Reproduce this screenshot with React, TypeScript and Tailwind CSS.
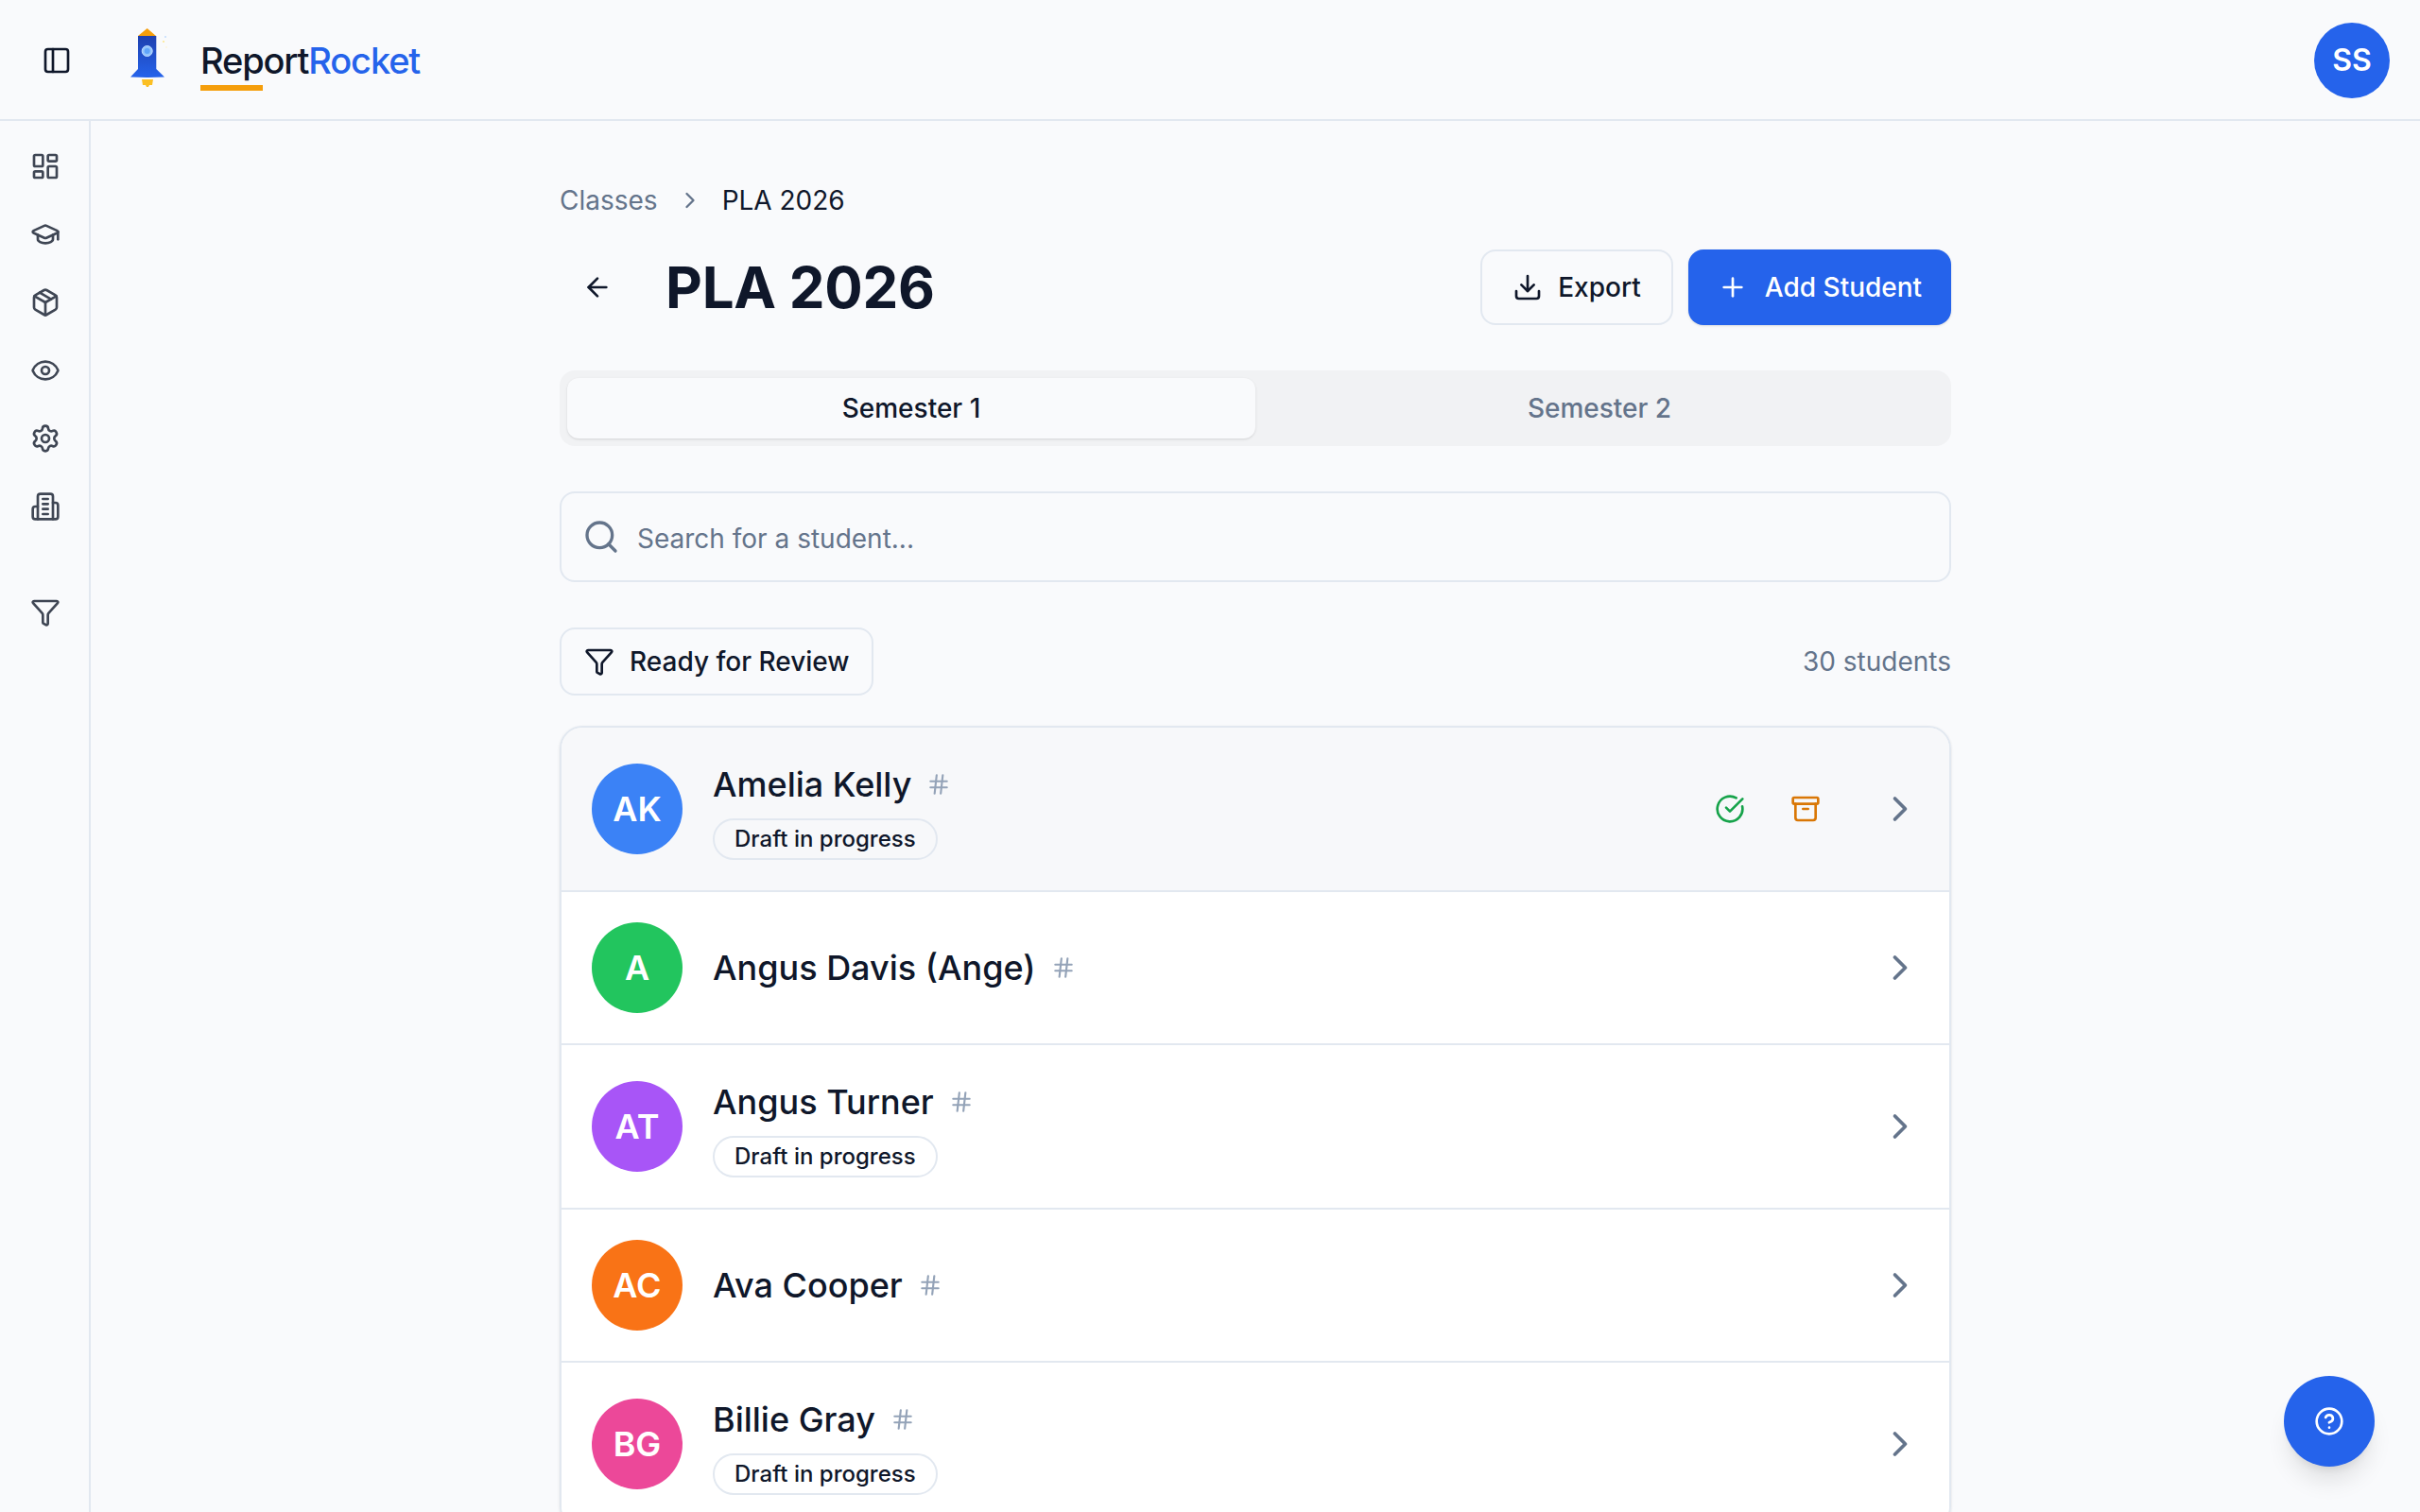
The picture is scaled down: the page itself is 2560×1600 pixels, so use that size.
import {
  ArrowLeft,
  Archive,
  ChevronRight,
  CircleCheckBig,
  CircleHelp,
  Download,
  Eye,
  Filter,
  GraduationCap,
  Hash,
  LayoutDashboard,
  Package,
  PanelLeft,
  Plus,
  Search,
  Settings,
} from 'lucide-react'

const students = [
  { name: 'Amelia Kelly', initials: 'AK', color: 'bg-[#3b82f6]', draft: true, active: true },
  { name: 'Angus Davis (Ange)', initials: 'A', color: 'bg-[#22c55e]', draft: false, active: false },
  { name: 'Angus Turner', initials: 'AT', color: 'bg-[#a855f7]', draft: true, active: false },
  { name: 'Ava Cooper', initials: 'AC', color: 'bg-[#f97316]', draft: false, active: false },
  { name: 'Billie Gray', initials: 'BG', color: 'bg-[#ec4899]', draft: true, active: false },
]

function BuildingIcon() {
  return (
    <svg width="32" height="32" viewBox="0 0 24 24" fill="none" stroke="currentColor" strokeWidth="2" strokeLinecap="round" strokeLinejoin="round">
      <path d="M6 22V4a2 2 0 0 1 2-2h8a2 2 0 0 1 2 2v18Z" />
      <path d="M6 12H4a2 2 0 0 0-2 2v6a2 2 0 0 0 2 2h2" />
      <path d="M18 9h2a2 2 0 0 1 2 2v9a2 2 0 0 1-2 2h-2" />
      <path d="M10 6h4" />
      <path d="M10 10h4" />
      <path d="M10 14h4" />
      <path d="M10 18h4" />
    </svg>
  )
}

function RocketLogo() {
  return (
    <svg width="60" height="80" viewBox="0 0 60 80" className="shrink-0">
      <defs>
        <linearGradient id="body" x1="0" y1="0" x2="0" y2="1">
          <stop offset="0" stopColor="#1e40af" />
          <stop offset="1" stopColor="#2563eb" />
        </linearGradient>
      </defs>
      <path d="M26 14 L16.5 14 L16 14 L25.7 6 L35 14 Z" fill="#f59e0b" />
      <path d="M16 14 H35.3 V49 L44 57.5 L27 58 H25 L8 57.5 L16 49 Z" fill="url(#body)" />
      <path d="M20 60 H32 L31 66 L28 66 L27 68 L25 68 L24 66 L21 66 Z" fill="#fbbf24" />
      <circle cx="25.7" cy="30" r="5.5" fill="#93c5fd" stroke="#bfdbfe" strokeWidth="1" />
      <circle cx="25.7" cy="30" r="3" fill="#60a5fa" />
      <circle cx="45" cy="15" r="1" fill="#bfdbfe" />
      <circle cx="43" cy="20" r="1" fill="#fde68a" />
      <circle cx="46" cy="26" r="0.8" fill="#fef3c7" />
    </svg>
  )
}

function StudentRow({ s }: { s: (typeof students)[number] }) {
  return (
    <div
      className={`flex items-center gap-8 border-b-2 border-[#e2e8f0] px-8 ${s.draft ? 'h-[174px]' : 'h-[162px]'} ${s.active ? 'bg-[#f7f8fa]' : 'bg-white'}`}
    >
      <div className={`flex size-24 shrink-0 items-center justify-center rounded-full text-[36px] font-semibold text-white ${s.color}`}>
        {s.initials}
      </div>
      <div className={`flex min-w-0 flex-1 flex-col items-start gap-3 ${s.draft ? 'pt-1' : ''}`}>
        <div className="flex items-center gap-4">
          <span className="text-[36px] leading-[48px] font-medium text-[#0f172a]">{s.name}</span>
          <Hash size={26} strokeWidth={2} className="text-[#94a3b8]" />
        </div>
        {s.draft && (
          <span className="rounded-full border-2 border-[#e2e8f0] px-[21px] py-1 text-[24px] leading-8 font-medium text-[#0f172a]">
            Draft in progress
          </span>
        )}
      </div>
      {s.active && (
        <div className="flex items-center gap-12 pr-[30px]">
          <CircleCheckBig size={32} className="text-[#16a34a]" />
          <Archive size={32} className="text-[#d97706]" />
        </div>
      )}
      <ChevronRight size={44} className="-mr-[2px] text-[#64748b]" />
    </div>
  )
}

export default function App() {
  return (
    <div className="flex h-screen flex-col overflow-hidden bg-[#f9fafc] font-['Inter',sans-serif] text-[#0f172a]">
      {/* Top bar */}
      <header className="flex h-[128px] shrink-0 items-center justify-between border-b-2 border-[#e2e8f0] pt-0.5 pr-8 pl-11">
        <div className="flex items-center">
          <PanelLeft size={32} className="text-[#0f172a]" />
          <div className="ml-[54px] flex items-center gap-[26px]">
            <RocketLogo />
            <div className="relative -ml-1 text-[38px] leading-none font-medium tracking-[-0.03em]">
              <span className="text-[#0f172a]">Report</span>
              <span className="text-[#2563eb]">Rocket</span>
              <span className="absolute top-[45px] left-0 h-1.5 w-[66px] bg-[#f59e0b]" />
            </div>
          </div>
        </div>
        <div className="flex size-20 items-center justify-center rounded-full bg-[#2563eb] text-[32px] font-semibold text-white">
          SS
        </div>
      </header>

      <div className="flex min-h-0 flex-1">
        {/* Sidebar */}
        <aside className="flex w-[96px] shrink-0 flex-col items-center gap-10 border-r-2 border-[#e2e8f0] pt-8 pl-0.5 text-[#3f4654]">
          <LayoutDashboard size={32} />
          <GraduationCap size={32} />
          <Package size={32} />
          <Eye size={32} />
          <Settings size={32} />
          <BuildingIcon />
          <Filter size={32} className="mt-[40px]" />
        </aside>

        <main className="min-w-0 flex-1 overflow-hidden">
          <div className="mx-auto w-[1472px] pt-16">
            {/* Breadcrumb */}
            <div className="flex h-10 items-center gap-5 text-[28px]">
              <span className="text-[#64748b]">Classes</span>
              <ChevronRight size={28} className="text-[#64748b]" />
              <span>PLA 2026</span>
            </div>

            {/* Title row */}
            <div className="mt-8 flex h-20 items-center">
              <ArrowLeft size={32} className="ml-6" />
              <h1 className="ml-[56px] flex-1 text-[60px] font-bold tracking-[-0.25px]">PLA 2026</h1>
              <button className="flex h-20 w-[204px] items-center justify-center gap-4 rounded-2xl border-2 border-[#e2e8f0] text-[28px] font-medium">
                <Download size={32} />
                Export
              </button>
              <button className="ml-4 flex h-20 w-[278px] items-center justify-center gap-[18px] rounded-2xl bg-[#2563eb] text-[28px] font-medium text-white shadow-sm">
                <Plus size={32} />
                Add Student
              </button>
            </div>

            {/* Semester tabs */}
            <div className="mt-12 grid h-20 grid-cols-2 rounded-2xl bg-[#f1f2f4] p-2 text-[28px] font-medium">
              <div className="flex items-center justify-center rounded-xl bg-[#f9fafc] shadow-sm">Semester 1</div>
              <div className="flex items-center justify-center text-[#64748b]">Semester 2</div>
            </div>

            {/* Search */}
            <div className="mt-12 flex h-24 items-center gap-[18px] rounded-2xl border-2 border-[#e2e8f0] px-[22px] text-[28px] text-[#64748b]">
              <Search size={40} />
              <span className="pt-1">Search for a student...</span>
            </div>

            {/* Filter + count */}
            <div className="mt-12 flex items-center justify-between">
              <button className="flex h-[72px] items-center gap-4 rounded-2xl border-2 border-[#e2e8f0] pr-[23px] pl-6 text-[28px] font-medium">
                <Filter size={32} />
                Ready for Review
              </button>
              <span className="text-[28px] text-[#64748b]">30 students</span>
            </div>

            {/* Student list */}
            <div className="mt-8 overflow-hidden rounded-3xl border-2 border-[#e2e8f0] shadow-sm">
              {students.map((s) => (
                <StudentRow key={s.name} s={s} />
              ))}
            </div>
          </div>
        </main>
      </div>

      <button className="absolute top-[1456px] left-[2416px] flex size-24 items-center justify-center rounded-full bg-[#2563eb] text-white shadow-xl">
        <CircleHelp size={32} />
      </button>
    </div>
  )
}
